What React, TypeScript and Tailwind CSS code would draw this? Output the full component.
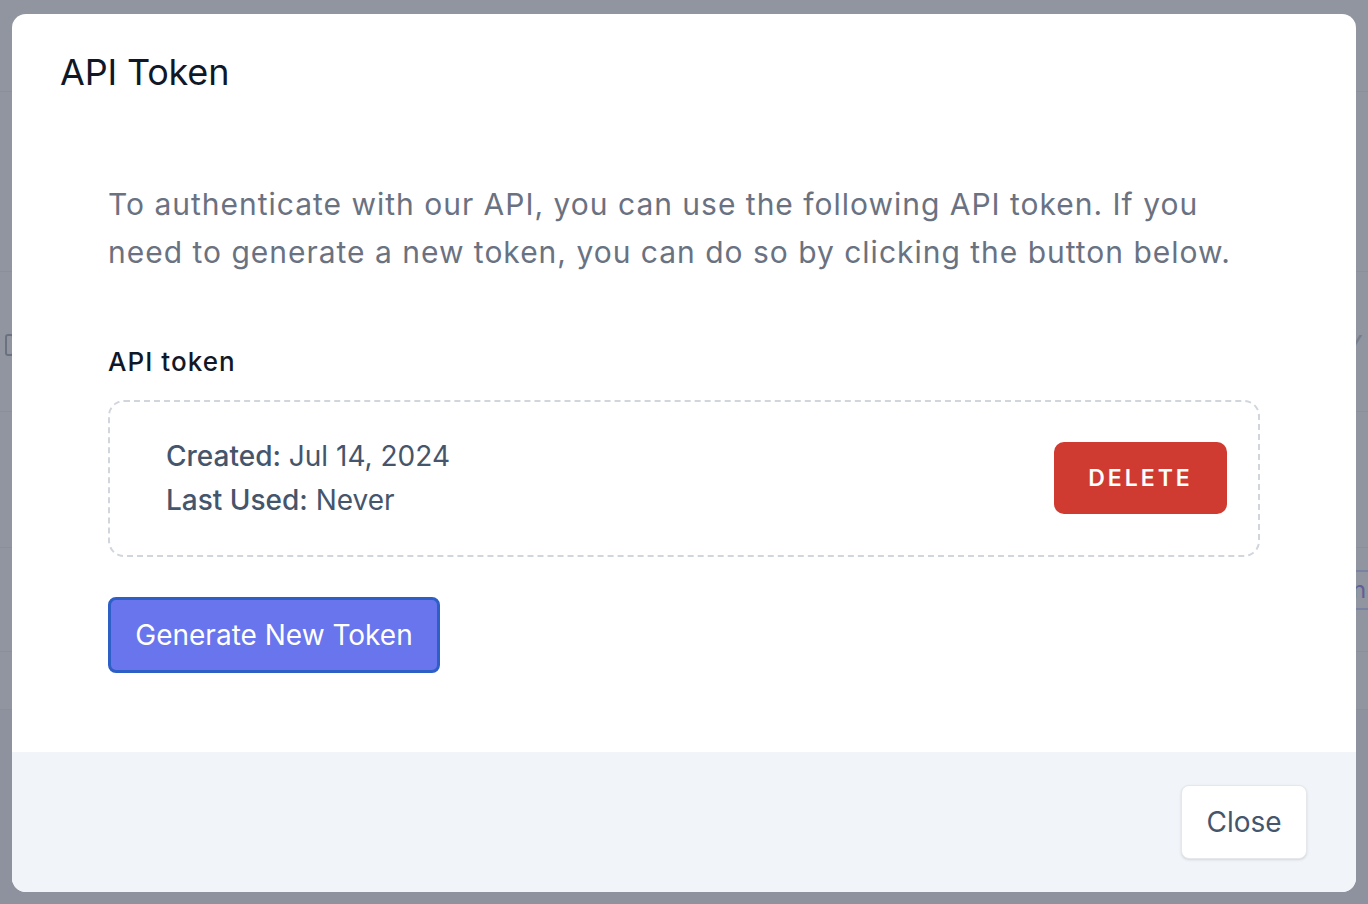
import React from "react";

function BackgroundPage() {
  return (
    <div className="h-[904px] w-full bg-white flex flex-col">
      <div className="h-[92px] border-b border-gray-200" />
      <div className="h-[180px] border-b border-gray-200" />
      <div className="h-[140px] border-b border-gray-200 flex items-center justify-between px-[5px] pt-[6px]">
        <div className="w-[9px] h-[22px] rounded-[3px] border-2 border-gray-500" />
        <div className="text-[26px] text-gray-400 font-['Inter']">Y</div>
      </div>
      <div className="h-[136px] border-b border-gray-200" />
      <div className="h-[104px] border-b border-gray-200 flex items-center justify-end">
        <div className="h-[40px] w-[20px] border-y-2 border-l-2 border-indigo-300 flex items-center pl-[2px] text-[24px] text-indigo-700 font-['Inter'] mb-[20px]">n</div>
      </div>
      <div className="h-[58px] border-b border-gray-200" />
      <div className="flex-1 bg-gray-100" />
    </div>
  );
}

export default function App() {
  return (
    <div className="relative h-[904px] w-full overflow-hidden font-['Inter',sans-serif]">
      <BackgroundPage />
      <div className="absolute inset-0 bg-[#6b7280]/75" />
      <div className="absolute inset-0 pt-[14px] px-[12px]">
        <div className="h-[878px] w-full rounded-[14px] bg-white overflow-hidden flex flex-col">
          <div className="flex-1 px-[48px]">
            <h2 className="pt-[38px] text-[36px] leading-[40px] tracking-[-0.005em] text-gray-900 font-normal">API Token</h2>
            <div className="px-[48px]">
              <p className="mt-[88px] text-[30px] leading-[48px] tracking-[0.033em] text-gray-500">
                To authenticate with our API, you can use the following API token. If you need to generate a new token, you can do so by clicking the button below.
              </p>
              <div className="mt-[70px] text-[26px] leading-[32px] tracking-[0.04em] text-gray-900 font-medium">API token</div>
              <div className="mt-[22px] rounded-[16px] border-2 border-dashed border-gray-300 pl-[56px] pr-[31px] pt-[32px] pb-[33px] flex items-center justify-between">
                <div className="text-[28px] leading-[44px] text-slate-600">
                  <div>
                    <span className="font-medium">Created:</span> Jul 14, 2024
                  </div>
                  <div>
                    <span className="font-medium">Last Used:</span> Never
                  </div>
                </div>
                <button className="h-[72px] w-[173px] rounded-[10px] bg-[#cf3a31] text-white text-[23px] font-semibold tracking-[0.13em] flex items-center justify-center">
                  DELETE
                </button>
              </div>
              <button className="mt-[40px] h-[76px] w-[332px] rounded-[8px] border-[3px] border-[#2d5fc7] bg-[#6875ec] text-white text-[28px] flex items-center justify-center">
                Generate New Token
              </button>
            </div>
          </div>
          <div className="h-[140px] bg-[#f1f5f9] flex items-center justify-end pr-[49px]">
            <button className="h-[74px] w-[126px] rounded-[8px] bg-white border border-gray-200 shadow-sm text-[28px] text-slate-600 flex items-center justify-center">
              Close
            </button>
          </div>
        </div>
      </div>
    </div>
  );
}
